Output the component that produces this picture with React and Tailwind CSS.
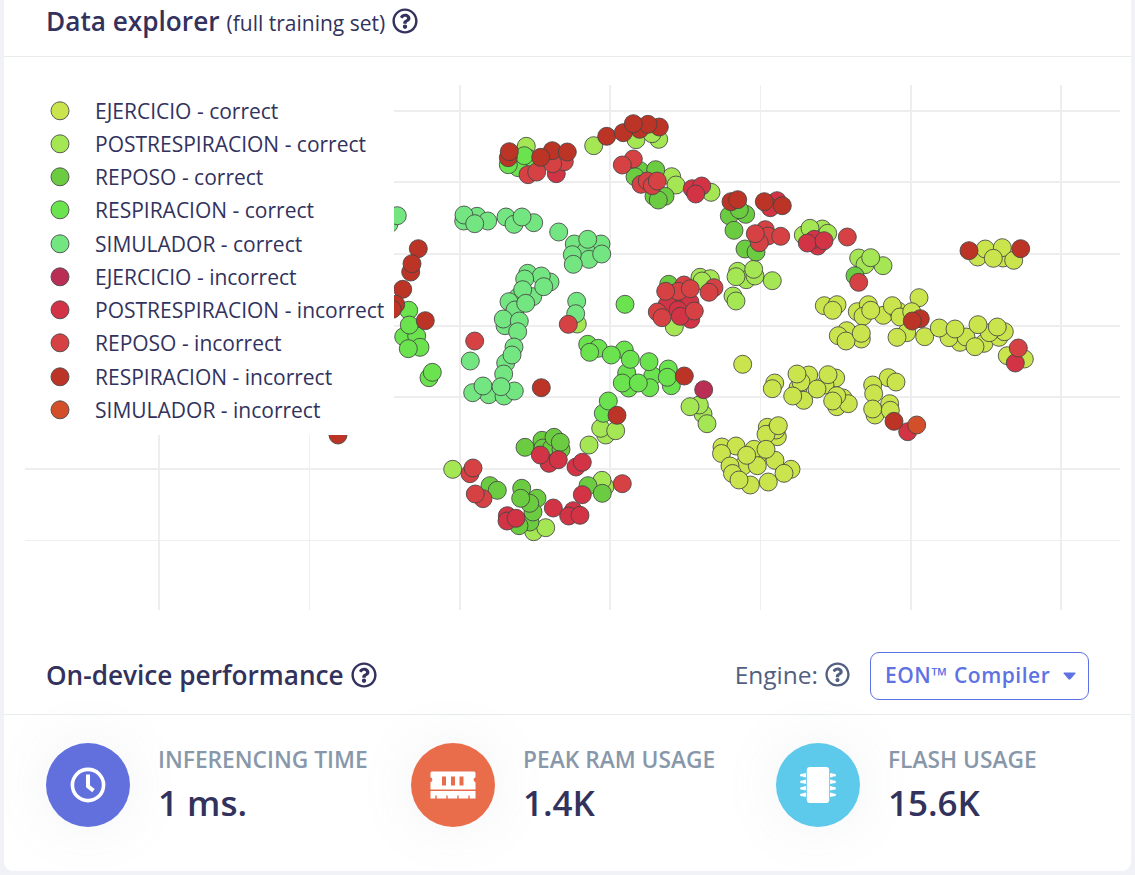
import React from "react";
import { FaRegQuestionCircle } from "react-icons/fa";

const SERIES = [
  {
    label: "EJERCICIO - correct",
    color: "#cae44d",
    points: [
      [742.7, 364.3], [824.3, 305.7], [837, 304.7], [832.7, 310.3], [857.3, 311.7], [868.3, 304.7], [863, 316.3],
      [883.3, 315.3], [870.7, 310.3], [898, 311], [892.3, 305.7], [900, 317], [919, 297.7], [906.7, 332.7],
      [911.7, 311.7], [897, 337.3], [924.7, 336.7], [846.7, 330.7], [838.3, 335.7], [861.3, 339], [846, 341],
      [861.3, 333.3], [774.7, 383], [772.3, 388.7], [808.7, 375], [798, 388], [801, 382], [797, 374],
      [803.7, 400.3], [792.7, 396], [835.7, 378], [825, 385], [817, 389], [828, 374.7], [843, 398],
      [836.7, 406.7], [848.3, 403.7], [836.7, 395.7], [832.7, 401], [888.3, 377.7], [896, 382], [872.7, 385],
      [873.7, 393.7], [889.7, 403.7], [875, 415], [872.7, 409], [890.3, 410.3], [767.3, 427.3], [777.3, 436.7],
      [776, 430], [766, 434.3], [778.3, 425.7], [760, 453], [754, 449.3], [722, 447], [736, 446], [721.5, 453.5],
      [775, 460.3], [743, 466], [730, 466], [757.3, 465.7], [766, 449.3], [746.7, 455.3], [791, 469.3],
      [784, 473.3], [732.5, 473.5], [750.3, 485], [739, 480], [768.3, 482], [977.7, 257], [985.3, 249],
      [1003, 258], [1002.3, 247.7], [993.3, 258.3], [1013.7, 260.3], [960, 342.3], [949, 337.7], [966, 337],
      [939.3, 328], [955, 329], [984, 343.3], [999, 337.3], [1004.3, 331.7], [989.3, 332.7], [978, 324.7],
      [997.3, 327], [975, 346.7], [1007.3, 355.7], [1024.3, 359],
    ],
  },
  {
    label: "POSTRESPIRACION - correct",
    color: "#a5e654",
    points: [
      [526.3, 146.3], [593.7, 145.7], [636, 139.7], [658.7, 139.3], [652, 133.7], [671.7, 176.7], [676, 185],
      [711, 192.3], [803.3, 235], [822.3, 229], [827.7, 233.3], [810, 228.3], [858.7, 258], [883, 265.7],
      [865, 264.7], [870.7, 257.7], [737.7, 271.3], [746.3, 279.7], [755, 276], [736, 276.7], [753.7, 269.3],
      [772.3, 280.7], [733, 296], [736, 301], [700, 277.3], [710.3, 278.7], [702, 281], [577.3, 324],
      [674.3, 327], [703, 414], [699.3, 405], [690, 406.7], [707, 423.7], [605.7, 435], [600.7, 428.3],
      [615.7, 430.7], [589, 445], [452.7, 469.3], [533.7, 531.7], [545.7, 527.7], [605, 486.7], [602, 480.3],
    ],
  },
  {
    label: "REPOSO - correct",
    color: "#6ccc41",
    points: [
      [640, 170.7], [655.7, 169.7], [635, 176.7], [654, 196.3], [665, 196.3], [658.3, 200], [729.3, 215.7],
      [745.7, 214.3], [739.3, 209.7], [734, 230.3], [745, 249], [756, 252], [855, 275.7], [668.7, 284.3],
      [525, 447.3], [542, 440.3], [543, 448], [551.7, 448], [561, 449.3], [554, 437.3], [560.3, 442.3],
      [490, 485.7], [497.3, 490.3], [521.7, 488.3], [537, 498.3], [530, 522], [533, 512], [529.7, 503.3],
      [520.7, 498.3], [519, 525.7], [588, 485.7], [602.3, 493.3],
    ],
  },
  {
    label: "RESPIRACION - correct",
    color: "#6ae34e",
    points: [
      [528, 158], [518.3, 167.7], [508.3, 164.7], [524.3, 155.7], [408.7, 310.3], [403.7, 336.7], [416.7, 336],
      [409.3, 325], [420, 347.3], [408.3, 348.7], [429, 377.7], [432.3, 372.3], [625, 304.3], [587.7, 344.3],
      [598.3, 348.3], [589.7, 352.3], [624.3, 350], [611.3, 355], [626.7, 373], [630.3, 359.3], [652.7, 376],
      [649, 361.7], [628.7, 388], [649.7, 387.7], [622.3, 383], [638.3, 383], [668.3, 369], [671.3, 385.7],
      [667.3, 377.3], [603.3, 413.3], [608.3, 401],
    ],
  },
  {
    label: "SIMULADOR - correct",
    color: "#73e681",
    points: [
      [389, 224], [397.3, 215.7], [463.7, 221], [477, 216.3], [487.7, 221], [464, 215], [474.7, 223.7],
      [506, 217], [533.7, 222.7], [514, 224.3], [522, 217], [558.7, 232], [574.3, 244], [601, 244],
      [586, 251], [589, 259.3], [572.3, 254.7], [587.7, 239.3], [573.3, 264.3], [601.7, 254], [576.7, 301.3],
      [575.7, 313.7], [470.3, 361], [527.7, 273.3], [550, 282], [541.3, 276], [524.7, 279], [518, 297],
      [532.7, 296.7], [543.7, 286.7], [522.7, 289.7], [509, 301.7], [515, 310], [525.7, 303.3], [505, 325.7],
      [503.3, 319], [519.3, 321], [517.7, 331.7], [514, 347], [505.7, 363], [512, 355], [503.7, 374],
      [488.7, 394.7], [504, 396], [472.7, 392.7], [483, 386], [514.3, 391], [501, 386.7],
    ],
  },
  {
    label: "EJERCICIO - incorrect",
    color: "#ba2d54",
    points: [[703.7, 389.7]],
  },
  {
    label: "POSTRESPIRACION - incorrect",
    color: "#d23345",
    points: [
      [556.3, 173.7], [692.3, 188.7], [701.7, 186], [695.7, 194], [777, 200.7], [770.3, 207.7], [817.7, 246],
      [814.3, 239.3], [807.3, 243], [824, 240.7], [678, 302], [667.3, 304.3], [690, 302.3], [678, 310],
      [690.7, 319.3], [680.3, 316.3], [549, 463.3], [540.3, 455], [558.3, 459.7], [576, 467], [582.3, 462.3],
      [553.3, 508], [582.3, 494.7], [573.3, 510.7], [568.7, 516], [580, 515.3], [507.3, 515.7], [507, 521],
      [516, 518.3], [907.7, 431.7], [1015.3, 363],
    ],
  },
  {
    label: "REPOSO - incorrect",
    color: "#d64143",
    points: [
      [528, 174.7], [536.7, 172], [564.3, 161.7], [552.7, 163.7], [633.3, 159], [622.3, 165], [641, 184.3],
      [647.3, 181], [652.3, 185.7], [657.3, 181], [765.3, 229.7], [768, 236], [780.7, 236.3], [759.3, 242.7],
      [755.3, 233.7], [847.3, 237], [858.7, 282.3], [714, 287.7], [709, 292.3], [474.7, 341], [568.3, 324.3],
      [684, 285], [678.3, 291.3], [665.7, 291.3], [690.3, 288.7], [657.3, 312], [662, 317.7], [694.3, 311],
      [470, 473.7], [473, 468], [483, 498.7], [475.3, 494], [622.3, 483.7], [1018.3, 348],
    ],
  },
  {
    label: "RESPIRACION - incorrect",
    color: "#bb3426",
    points: [
      [508.3, 157.7], [509.3, 151.7], [552.3, 150.7], [567.3, 152], [540.7, 157.3], [606.7, 136.3],
      [639.7, 129.3], [623.3, 132.7], [659.3, 127], [648, 124.3], [633.3, 123.7], [731, 201.7], [737.7, 199.7],
      [764.3, 201.7], [782.3, 205.7], [418.3, 248.7], [410.7, 272], [412, 263.7], [402.7, 289.3],
      [395.7, 304.3], [392.3, 309.3], [425.3, 320.7], [541.3, 387.7], [684.3, 376], [617, 415.3],
      [894, 421.3], [920.3, 318.7], [912.3, 321], [969, 250.7], [1020.7, 248.7], [338, 435],
    ],
  },
  {
    label: "SIMULADOR - incorrect",
    color: "#d24f2a",
    points: [[916.7, 425]],
  },
];

const GRID_X = [[159, 2], [309, 1], [459, 2], [609, 2], [760, 1], [910, 2], [1060, 2]].map(([x, w]) => [x === 159 ? 158 : x, w]);
const GRID_Y = [[110, 2], [181, 2], [253, 2], [325, 2], [396, 2], [468, 2], [540, 1]];

function Scatter() {
  return (
    <svg className="block" width="1096" height="525" viewBox="25 85 1096 525">
      <g fill="#eeeeee">
        {GRID_X.map(([x, w]) => (
          <rect key={x} x={x} y="85" width={w} height="525" />
        ))}
        {GRID_Y.map(([y, h]) => (
          <rect key={y} x="25" y={y} width="1095" height={h} />
        ))}
      </g>
      {SERIES.map((s) => (
        <g key={s.label} fill={s.color} stroke="#444444" strokeOpacity="0.85" strokeWidth="1">
          {s.points.map(([x, y], i) => (
            <circle key={i} cx={x} cy={y} r="9" />
          ))}
        </g>
      ))}
    </svg>
  );
}

function Legend() {
  return (
    <ul className="absolute top-0 left-0 flex h-[350px] w-[369px] flex-col bg-white pt-[9px] pl-[25px]">
      {SERIES.map((s) => (
        <li key={s.label} className="flex h-[33.25px] shrink-0 items-center">
          <svg className="mr-[25px] block shrink-0" width="20" height="20" viewBox="0 0 20 20">
            <circle cx="10" cy="9.8" r="9" fill={s.color} stroke="#444444" strokeOpacity="0.85" />
          </svg>
          <span className="pt-[1px] text-[21px] leading-[33px] whitespace-nowrap">{s.label}</span>
        </li>
      ))}
    </ul>
  );
}

function ClockIcon() {
  return (
    <svg width="36" height="36" viewBox="0 0 36 36" fill="none" stroke="white">
      <circle cx="18" cy="18" r="15.6" strokeWidth="3.6" />
      <path d="M18 7.5V19.3L23.5 23.6" strokeWidth="4" />
    </svg>
  );
}

function RamIcon() {
  return (
    <svg width="46" height="28" viewBox="0 0 46 28">
      <path
        fill="white"
        fillRule="evenodd"
        d="M2 0.5H44Q45.5 0.5 45.5 2V6.3A2.6 2.6 0 0 0 45.5 11.3V18.5H0.5V11.3A2.6 2.6 0 0 0 0.5 6.3V2Q0.5 0.5 2 0.5ZM12 5.5V14.5H16V5.5ZM21 5.5V14.5H25V5.5ZM29.5 5.5V14.5H33.5V5.5Z"
      />
      <path
        fill="white"
        d="M0.5 20H45.5V27.5H39.7V24.5H38.3V27.5H28.7V24.5H27.3V27.5H17.7V24.5H16.3V27.5H6.7V24.5H5.3V27.5H0.5Z"
      />
    </svg>
  );
}

function ChipIcon() {
  return (
    <svg width="36" height="36" viewBox="0 0 36 36" fill="white">
      <rect x="6.8" y="0" width="22.4" height="36" rx="3" />
      {[8.2, 14.8, 21.3, 27.8].map((y) => (
        <g key={y}>
          <path d={`M6 ${y - 2}H4L3 ${y - 1.4}H1.5Q0 ${y - 1.2} 0 ${y}T1.5 ${y + 1.4}H3L4 ${y + 2}H6Z`} />
          <path d={`M30 ${y - 2}H32L33 ${y - 1.4}H34.5Q36 ${y - 1.2} 36 ${y}T34.5 ${y + 1.4}H33L32 ${y + 2}H30Z`} />
        </g>
      ))}
    </svg>
  );
}

function Stat({ icon, tone, label, value }) {
  return (
    <div className="flex w-[365px] shrink-0">
      <div
        className={`flex size-[84px] shrink-0 items-center justify-center rounded-full shadow-[0_0_56px_rgba(136,152,170,0.12)] ${tone}`}
      >
        {icon}
      </div>
      <div className="ml-7 flex flex-col whitespace-nowrap">
        <span className="text-[22.75px] leading-[34px] font-semibold text-[#8898aa]">{label}</span>
        <span className="mt-[4px] text-[35px] leading-[44px] font-semibold">{value}</span>
      </div>
    </div>
  );
}

export default function App() {
  return (
    <div className="h-[875px] w-[1135px] overflow-hidden bg-[#f1f2f8] px-1 font-['Open_Sans',sans-serif] text-[#32325d]">
      <main className="flex h-[871px] flex-col overflow-hidden rounded-b-[9px] bg-white">
        <header className="flex h-[57px] shrink-0 items-center border-b border-[#e9ecef] pb-[14px] pl-[42px]">
          <h2 className="text-[26.2px] leading-9 font-semibold whitespace-nowrap">Data explorer</h2>
          <span className="ml-[7px] pt-[3px] text-[21px] leading-9 whitespace-nowrap">(full training set)</span>
          <FaRegQuestionCircle className="ml-[7px] size-[26px] shrink-0" />
        </header>
        <section className="relative mt-7 ml-[21px] shrink-0">
          <Scatter />
          <Legend />
        </section>
        <header className="mt-[27px] flex h-[78px] shrink-0 items-center border-b border-[#e9ecef] pr-[42px] pl-[42px]">
          <h2 className="-mt-[2px] text-[26.2px] leading-9 font-semibold whitespace-nowrap">On-device performance</h2>
          <FaRegQuestionCircle className="-mt-[2px] ml-[7px] size-[26px] shrink-0" />
          <div className="ml-auto flex items-center text-[#525f7f]">
            <span className="-mt-[2px] text-[24.5px] leading-9">Engine:</span>
            <FaRegQuestionCircle className="-mt-[2px] ml-[7px] size-[25px] shrink-0" />
            <button className="ml-5 flex h-12 w-[219px] items-center rounded-[9px] border border-[#5e72e4] pl-[14px] text-[21px] leading-8 font-semibold tracking-[0.53px] whitespace-nowrap text-[#5e72e4]">
              <span className="-mt-[2px]">EON™ Compiler</span>
              <svg className="mt-px mr-3 ml-auto" width="13" height="8" viewBox="0 0 13 8">
                <path d="M1 0.5H12Q13 0.8 12.4 1.6L7.5 7.2Q6.5 8 5.5 7.2L0.6 1.6Q0 0.8 1 0.5Z" fill="currentColor" />
              </svg>
            </button>
          </div>
        </header>
        <section className="flex pt-7 pl-[42px]">
          <Stat icon={<ClockIcon />} tone="bg-[#6270de]" label="INFERENCING TIME" value="1 ms." />
          <Stat icon={<RamIcon />} tone="bg-[#e96d4a]" label="PEAK RAM USAGE" value="1.4K" />
          <Stat icon={<ChipIcon />} tone="bg-[#5dc9eb]" label="FLASH USAGE" value="15.6K" />
        </section>
      </main>
    </div>
  );
}
